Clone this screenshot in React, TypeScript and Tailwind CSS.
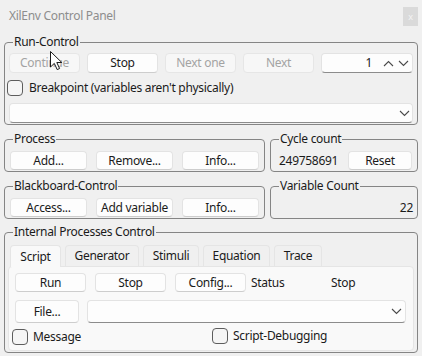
import React from "react";

const btn =
  "h-full flex items-center justify-center rounded-[4px] border border-[#e3e3e3] border-b-[#cdcdcd] bg-[#fdfdfd] text-[#1b1b1b]";
const btnOff =
  "h-full flex items-center justify-center rounded-[4px] border border-[#e6e6e6] bg-[#f7f7f7] text-[#a3a3a3]";

function Chevron({ up = false }: { up?: boolean }) {
  return (
    <svg width="11" height="7" viewBox="0 0 11 7" fill="none">
      <path
        d={up ? "M1 6L5.5 1.5L10 6" : "M1 1L5.5 5.5L10 1"}
        stroke="#4a4a4a"
        strokeWidth="1.1"
      />
    </svg>
  );
}

function Check({ label }: { label: string }) {
  return (
    <div className="flex items-center gap-[5px]">
      <div className="w-[16px] h-[16px] rounded-[4px] border border-[#5d5d5d] bg-[#f5f5f5]"></div>
      <span>{label}</span>
    </div>
  );
}

function Group({
  title,
  className,
  children,
}: {
  title: string;
  className: string;
  children: React.ReactNode;
}) {
  return (
    <fieldset className={"border border-[#858585] rounded-[4px] " + className}>
      <legend className="px-[1px] leading-[16px] text-[#1b1b1b]">{title}</legend>
      {children}
    </fieldset>
  );
}

export default function App() {
  return (
    <div className="relative w-[422px] h-[356px] bg-[#f0f0f0] px-[4px] text-[12px] tracking-[-0.3px] text-[#1b1b1b] font-['Noto_Sans',sans-serif] overflow-hidden">
      {/* title bar */}
      <div className="h-[34px] flex items-start justify-between">
        <div className="pl-[5px] pt-[7px] text-[#8d8d8d]">XilEnv Control Panel</div>
        <div className="mt-[7px] w-[15px] h-[19px] bg-[#dadada] flex items-center justify-center text-[9px] text-[#f4f4f4]">
          x
        </div>
      </div>

      {/* run control */}
      <Group title="Run-Control" className="pl-[8px] pr-[4px] pt-[3px] pb-[1px]">
        <div className="flex h-[20px] gap-[7px] -ml-[4px]">
          <div className={btnOff + " w-[71px]"}>Continue</div>
          <div className={btn + " w-[71px]"}>Stop</div>
          <div className={btnOff + " w-[71px]"}>Next one</div>
          <div className={btnOff + " w-[71px]"}>Next</div>
          <div className="w-[92px] h-full flex items-center rounded-[4px] border border-[#e3e3e3] border-b-[#8c8c8c] bg-[#fdfdfd]">
            <span className="flex-1 text-right pr-[11px]">1</span>
            <div className="flex items-center gap-[4px] pr-[3px]">
              <Chevron up />
              <Chevron />
            </div>
          </div>
        </div>
        <div className="mt-[7px] -ml-[6px] h-[16px] flex">
          <div className="flex items-center gap-[6px]">
            <div className="w-[16px] h-[16px] rounded-[4px] border border-[#5d5d5d] bg-[#f5f5f5]"></div>
            <span>Breakpoint (variables aren't physically)</span>
          </div>
        </div>
        <div className="mt-[7px] -ml-[4px] h-[20px] flex items-center justify-end rounded-[4px] border border-[#e3e3e3] border-b-[#8c8c8c] bg-[#fdfdfd] pr-[2px]">
          <Chevron />
        </div>
      </Group>

      {/* process + cycle count */}
      <div className="mt-[6px] flex gap-[5px]">
        <Group title="Process" className="w-[261px] pl-[8px] pr-[4px] pt-[4px] pb-[1px]">
          <div className="flex h-[19px] gap-[9px] -ml-[3px]">
            <div className={btn + " w-[77px]"}>Add...</div>
            <div className={btn + " w-[77px]"}>Remove...</div>
            <div className={btn + " w-[77px]"}>Info...</div>
          </div>
        </Group>
        <Group title="Cycle count" className="w-[148px] pl-[8px] pr-[5px] pt-[4px] pb-[1px]">
          <div className="flex h-[19px] items-center">
            <span>249758691</span>
            <div className={btn + " w-[64px] ml-auto"}>Reset</div>
          </div>
        </Group>
      </div>

      {/* blackboard + variable count */}
      <div className="mt-[6px] flex gap-[5px]">
        <Group title="Blackboard-Control" className="w-[261px] pl-[8px] pr-[4px] pt-[4px] pb-[1px]">
          <div className="flex h-[19px] gap-[9px] -ml-[3px]">
            <div className={btn + " w-[77px]"}>Access...</div>
            <div className={btn + " w-[77px]"}>Add variable</div>
            <div className={btn + " w-[77px]"}>Info...</div>
          </div>
        </Group>
        <Group title="Variable Count" className="w-[148px] pl-[8px] pr-[4px] pt-[4px] pb-[1px]">
          <div className="flex h-[19px] items-center justify-end">22</div>
        </Group>
      </div>

      {/* internal processes */}
      <Group title="Internal Processes Control" className="mt-[5px] pl-[8px] pr-[3px] pt-[4px] pb-[1px]">
        <div className="-ml-[5px]">
          <div className="flex gap-[4px] pl-[2px] h-[22px] items-end">
            <div className="w-[51px] h-[22px] -mb-[1px] relative z-10 rounded-t-[4px] border border-[#e5e5e5] border-b-0 bg-[#f9f9f9] flex items-center justify-center">
              Script
            </div>
            <div className="w-[74px] h-[21px] rounded-t-[4px] border border-[#e5e5e5] border-b-0 bg-[#f0f0f0] flex items-center justify-center">
              Generator
            </div>
            <div className="w-[56px] h-[21px] rounded-t-[4px] border border-[#e5e5e5] border-b-0 bg-[#f0f0f0] flex items-center justify-center">
              Stimuli
            </div>
            <div className="w-[67px] h-[21px] rounded-t-[4px] border border-[#e5e5e5] border-b-0 bg-[#f0f0f0] flex items-center justify-center">
              Equation
            </div>
            <div className="w-[48px] h-[21px] rounded-t-[4px] border border-[#e5e5e5] border-b-0 bg-[#f0f0f0] flex items-center justify-center">
              Trace
            </div>
          </div>
          <div className="rounded-[4px] border border-[#e5e5e5] bg-[#f9f9f9] px-[6px] pt-[6px] pb-[6px]">
            <div className="flex h-[19px] gap-[9px] items-center">
              <div className={btn + " w-[71px]"}>Run</div>
              <div className={btn + " w-[71px]"}>Stop</div>
              <div className={btn + " w-[71px]"}>Config...</div>
              <div className="flex items-center -ml-[4px]">
                <span className="w-[80px]">Status</span>
                <span>Stop</span>
              </div>
            </div>
            <div className="mt-[8px] flex h-[23px] items-center gap-[8px]">
              <div className={btn + " w-[64px] h-[19px]"}>File...</div>
              <div className="w-[319px] h-full flex items-center justify-end rounded-[4px] border border-[#e3e3e3] border-b-[#8c8c8c] bg-[#fdfdfd] pr-[3px]">
                <Chevron />
              </div>
            </div>
            <div className="mt-[5px] -ml-[3px] flex h-[16px]">
              <div className="w-[200px]">
                <Check label="Message" />
              </div>
              <Check label="Script-Debugging" />
            </div>
          </div>
        </div>
      </Group>

      {/* mouse pointer */}
      <svg className="absolute left-[49px] top-[50px]" width="14" height="21" viewBox="0 0 14 21">
        <path
          d="M1.5 1.5V17L5.3 13.4L8.2 19.6L10.6 18.5L7.8 12.5H12.8Z"
          fill="#ffffff"
          stroke="#1a1a1a"
          strokeWidth="1"
          strokeLinejoin="round"
        />
      </svg>
    </div>
  );
}
